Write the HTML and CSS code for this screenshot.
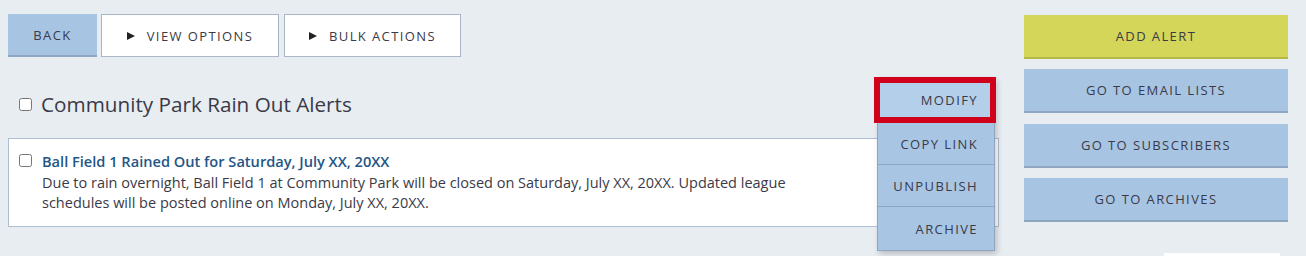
FILE: index.html
```html
<!DOCTYPE html>
<html>
<head>
<meta charset="utf-8">
<link rel="stylesheet" href="styles.css">
</head>
<body>
<div class="page">
  <div class="main">
    <div class="toolbar">
      <button class="btn btn-blue btn-back">BACK</button>
      <button class="btn btn-outline btn-view"><span class="tri"></span>VIEW OPTIONS</button>
      <button class="btn btn-outline btn-bulk"><span class="tri"></span>BULK ACTIONS</button>
    </div>
    <div class="group-head">
      <input type="checkbox" class="cb">
      <h2 class="group-title">Community Park Rain Out Alerts</h2>
    </div>
    <div class="card">
      <input type="checkbox" class="cb cb-card">
      <div class="card-body">
        <div class="card-title">Ball Field 1 Rained Out for Saturday, July XX, 20XX</div>
        <div class="card-text">Due to rain overnight, Ball Field 1 at Community Park will be closed on Saturday, July XX, 20XX. Updated league schedules will be posted online on Monday, July XX, 20XX.</div>
      </div>
    </div>
    <div class="menu">
      <div class="menu-item active">MODIFY</div>
      <div class="menu-item">COPY LINK</div>
      <div class="menu-item">UNPUBLISH</div>
      <div class="menu-item last">ARCHIVE</div>
    </div>
  </div>
  <div class="side">
    <button class="sbtn sbtn-yellow">ADD ALERT</button>
    <button class="sbtn">GO TO EMAIL LISTS</button>
    <button class="sbtn">GO TO SUBSCRIBERS</button>
    <button class="sbtn">GO TO ARCHIVES</button>
    <div class="side-stub"></div>
  </div>
</div>
</body>
</html>
```
FILE: styles.css
```css
* { box-sizing: border-box; }
html, body { margin: 0; padding: 0; }
body {
  background: #e8edf2;
  font-family: "Open Sans", "Noto Sans", sans-serif;
  color: #3a3a48;
  width: 1306px;
  height: 256px;
  overflow: hidden;
}
.page {
  display: flex;
  padding: 14px 0 0 8px;
  gap: 25px;
}
.main {
  position: relative;
  width: 991px;
}
.toolbar {
  display: flex;
  gap: 4px;
  height: 43px;
}
.btn {
  font-family: inherit;
  font-size: 13px;
  letter-spacing: 1.4px;
  color: #3a3a48;
  height: 43px;
  margin: 0;
  padding: 0;
  cursor: pointer;
  display: flex;
  align-items: center;
  justify-content: center;
}
.btn-blue {
  background: #a7c5e3;
  border: none;
  border-bottom: 2px solid #8fa5c0;
}
.btn-back { width: 89px; }
.btn-outline {
  background: #fff;
  border: 1px solid #aab6c6;
}
.btn-view { width: 178px; }
.btn-bulk { width: 177px; margin-left: 1px; }
.tri {
  width: 0;
  height: 0;
  border-top: 4px solid transparent;
  border-bottom: 4px solid transparent;
  border-left: 8px solid #222;
  margin-right: 12px;
}
.group-head {
  display: flex;
  align-items: center;
  height: 40px;
  margin-top: 27px;
  padding-left: 11px;
}
.cb {
  width: 13px;
  height: 13px;
  margin: 0;
}
.group-title {
  margin: 0 0 0 9px;
  font-weight: 400;
  font-size: 20.7px;
  color: #3a3a48;
}
.card {
  margin-top: 14px;
  background: #fff;
  border: 1px solid #aebfd3;
  height: 89px;
  display: flex;
  padding: 15px 0 0 10px;
}
.cb-card { margin-top: 0; }
.card-body {
  margin-left: 10px;
  width: 780px;
  margin-top: -2px;
}
.card-title {
  font-weight: 600;
  font-size: 14.6px;
  color: #1f5687;
  line-height: 18px;
}
.card-text {
  font-size: 14.5px;
  line-height: 20px;
  margin-top: 3px;
}
.menu {
  position: absolute;
  left: 869px;
  top: 63px;
  width: 118px;
  background: #a8c5e3;
  border: 1px solid #8fa5c0;
  border-top: none;
  box-shadow: 2px 3px 6px rgba(0,0,0,0.2);
}
.menu-item {
  height: 42px;
  display: flex;
  align-items: center;
  justify-content: flex-end;
  padding-right: 16px;
  font-size: 13px;
  letter-spacing: 1.4px;
  border-bottom: 1px solid #8ea5c0;
}
.menu-item.last { border-bottom: none; height: 43px; }
.menu-item.active {
  background: #b4cfea;
  border: 6px solid #d0021b;
  margin: 0 -2px 0 -4px;
  height: 46px;
  padding-right: 12px;
}
.side {
  display: flex;
  flex-direction: column;
  width: 264px;
  margin-top: 1px;
}
.sbtn {
  font-family: inherit;
  font-size: 13px;
  letter-spacing: 1.4px;
  color: #3a3a48;
  height: 44px;
  background: #a7c5e3;
  border: none;
  border-bottom: 2px solid #8fa5c0;
  margin: 0 0 10px 0;
  padding: 0;
}
.sbtn:nth-child(2) { margin-bottom: 11px; }
.sbtn-yellow {
  background: #d4d659;
  border-bottom-color: #b6b845;
}
.side-stub {
  margin: 21px 0 0 140px;
  width: 116px;
  height: 10px;
  background: #fff;
}
```
